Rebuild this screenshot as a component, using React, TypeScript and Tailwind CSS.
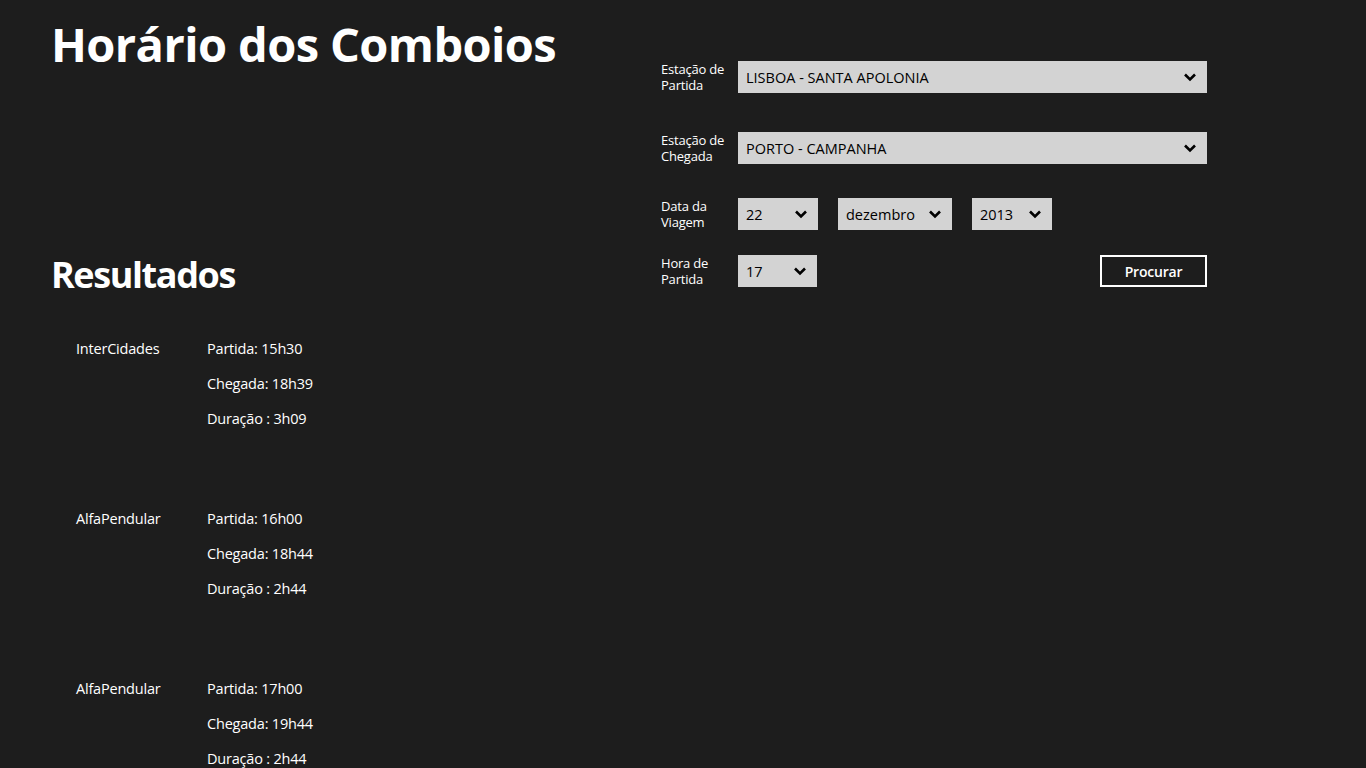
import React from "react";

const font = { fontFamily: '"Open Sans", "Noto Sans", sans-serif' };

function Chevron() {
  return (
    <svg width="14" height="10" viewBox="0 0 14 10" className="shrink-0">
      <path d="M2 2.5 L7 7.5 L12 2.5" fill="none" stroke="#000" strokeWidth="2.6" strokeLinecap="butt" />
    </svg>
  );
}

function Select({ value, w }: { value: string; w: string }) {
  return (
    <div className={`${w} h-[32px] bg-[#d3d3d3] flex items-center justify-between pl-[8px] pr-[10px]`}>
      <span className="text-[14.5px] leading-[20px] pt-[1px] text-black">{value}</span>
      <Chevron />
    </div>
  );
}

function Label({ a, b }: { a: string; b: string }) {
  return (
    <div className="w-[77px] text-[13px] leading-[16px] text-white tracking-[-0.2px]">
      <div>{a}</div>
      <div>{b}</div>
    </div>
  );
}

const results = [
  { name: "InterCidades", p: "15h30", c: "18h39", d: "3h09" },
  { name: "AlfaPendular", p: "16h00", c: "18h44", d: "2h44" },
  { name: "AlfaPendular", p: "17h00", c: "19h44", d: "2h44" },
];

export default function App() {
  return (
    <div style={font} className="w-[1366px] h-[768px] overflow-hidden bg-[#1d1d1d] text-white flex">
      <div className="w-[609px] pl-[51px] pt-[14px] flex flex-col">
        <h1 className="text-[47px] leading-[60px] font-bold tracking-[-0.6px] whitespace-nowrap">Horário dos Comboios</h1>
        <h2 className="mt-[179px] text-[36px] leading-[44px] font-bold tracking-[-1.4px]">Resultados</h2>
        <div className="mt-[42px] pl-[25px] flex flex-col gap-[80px]">
          {results.map((r, i) => (
            <div key={i} className="flex text-[14.5px] leading-[20px] tracking-[-0.2px]">
              <div className="w-[131px]">{r.name}</div>
              <div className="flex flex-col gap-[15px]">
                <div>Partida: {r.p}</div>
                <div>Chegada: {r.c}</div>
                <div>Duração : {r.d}</div>
              </div>
            </div>
          ))}
        </div>
      </div>
      <div className="pl-[52px] pt-[61px] flex flex-col">
        <div className="flex items-center">
          <Label a="Estação de" b="Partida" />
          <Select value="LISBOA - SANTA APOLONIA" w="w-[469px]" />
        </div>
        <div className="flex items-center mt-[39px]">
          <Label a="Estação de" b="Chegada" />
          <Select value="PORTO - CAMPANHA" w="w-[469px]" />
        </div>
        <div className="flex items-center mt-[34px]">
          <Label a="Data da" b="Viagem" />
          <div className="flex gap-[20px]">
            <Select value="22" w="w-[80px]" />
            <Select value="dezembro" w="w-[114px]" />
            <Select value="2013" w="w-[80px]" />
          </div>
        </div>
        <div className="flex items-center mt-[25px]">
          <Label a="Hora de" b="Partida" />
          <Select value="17" w="w-[79px]" />
          <div className="flex-1" />
          <button className="w-[107px] h-[32px] border-2 border-white text-[14px] font-semibold text-white tracking-[-0.2px]">Procurar</button>
        </div>
      </div>
    </div>
  );
}
